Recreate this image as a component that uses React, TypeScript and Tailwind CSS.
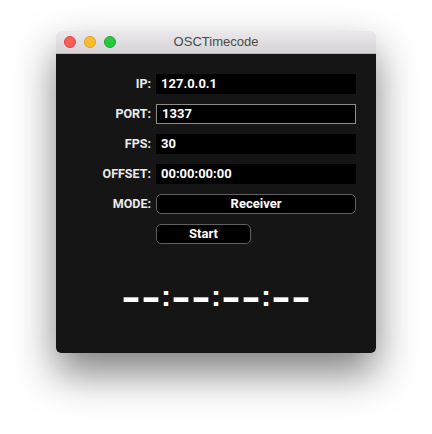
import React from 'react';

const font = { fontFamily: 'Roboto, "Liberation Sans", sans-serif' };

function Field({ label, value, boxed }: { label: string; value: string; boxed?: boolean }) {
  return (
    <>
      <div className="h-[20px] flex items-center justify-end text-[12.5px] font-bold text-[#ececec]">{label}</div>
      <div
        className={`h-[20px] flex items-center pl-[5px] bg-black text-[13px] font-bold text-white ${
          boxed ? 'border border-[#8c8c8c] pl-[4px]' : ''
        }`}
      >
        {value}
      </div>
    </>
  );
}

function Timecode() {
  const chars = '--:--:--:--'.split('');
  return (
    <div
      className="flex justify-center items-baseline h-[40px] mt-[31px] text-white"
      style={{ fontFamily: '"Liberation Sans", Arial, sans-serif' }}
    >
      {chars.map((c, i) =>
        c === '-' ? (
          <span key={i} className="w-[20px] text-center text-[60px] leading-[40px] font-normal">
            -
          </span>
        ) : (
          <span key={i} className="w-[10px] text-center text-[30px] leading-[40px] font-bold -translate-y-[9px]">
            :
          </span>
        )
      )}
    </div>
  );
}

export default function App() {
  return (
    <div className="w-[432px] h-[434px] bg-white pt-[31px] pl-[56px]" style={font}>
      <div className="w-[320px] h-[322px] rounded-[5px] shadow-[0_20px_40px_rgba(0,0,0,0.5)] flex flex-col overflow-hidden">
        <div className="h-[23px] bg-gradient-to-b from-[#ebe9eb] to-[#d5d3d5] border-b border-[#b9b9b9] flex items-center relative rounded-t-[5px]">
          <div className="flex gap-[8px] pl-[8px]">
            <span className="w-[12px] h-[12px] rounded-full bg-[#fc5f57] border border-[#e0443e]" />
            <span className="w-[12px] h-[12px] rounded-full bg-[#fdbc2e] border border-[#dea123]" />
            <span className="w-[12px] h-[12px] rounded-full bg-[#28c840] border border-[#1aab29]" />
          </div>
          <div
            className="absolute inset-0 flex items-center justify-center text-[13px] text-[#4a4a4a]"
            style={{ fontFamily: '"Liberation Sans", sans-serif' }}
          >
            OSCTimecode
          </div>
        </div>
        <div className="flex-1 bg-[#151515] rounded-b-[4px] pt-[20px]">
          <div className="grid grid-cols-[95px_200px] gap-x-[5px] gap-y-[10px]">
            <Field label="IP:" value="127.0.0.1" />
            <Field label="PORT:" value="1337" boxed />
            <Field label="FPS:" value="30" />
            <Field label="OFFSET:" value="00:00:00:00" />
            <div className="h-[20px] flex items-center justify-end text-[12.5px] font-bold text-[#ececec]">MODE:</div>
            <div className="h-[20px] flex items-center justify-center bg-black border border-[#606060] rounded-[5px] text-[13px] font-bold text-white">
              Receiver
            </div>
            <div />
            <div className="h-[20px] w-[95px] flex items-center justify-center bg-black border border-[#606060] rounded-[5px] text-[13px] font-bold text-white">
              Start
            </div>
          </div>
          <Timecode />
        </div>
      </div>
    </div>
  );
}
